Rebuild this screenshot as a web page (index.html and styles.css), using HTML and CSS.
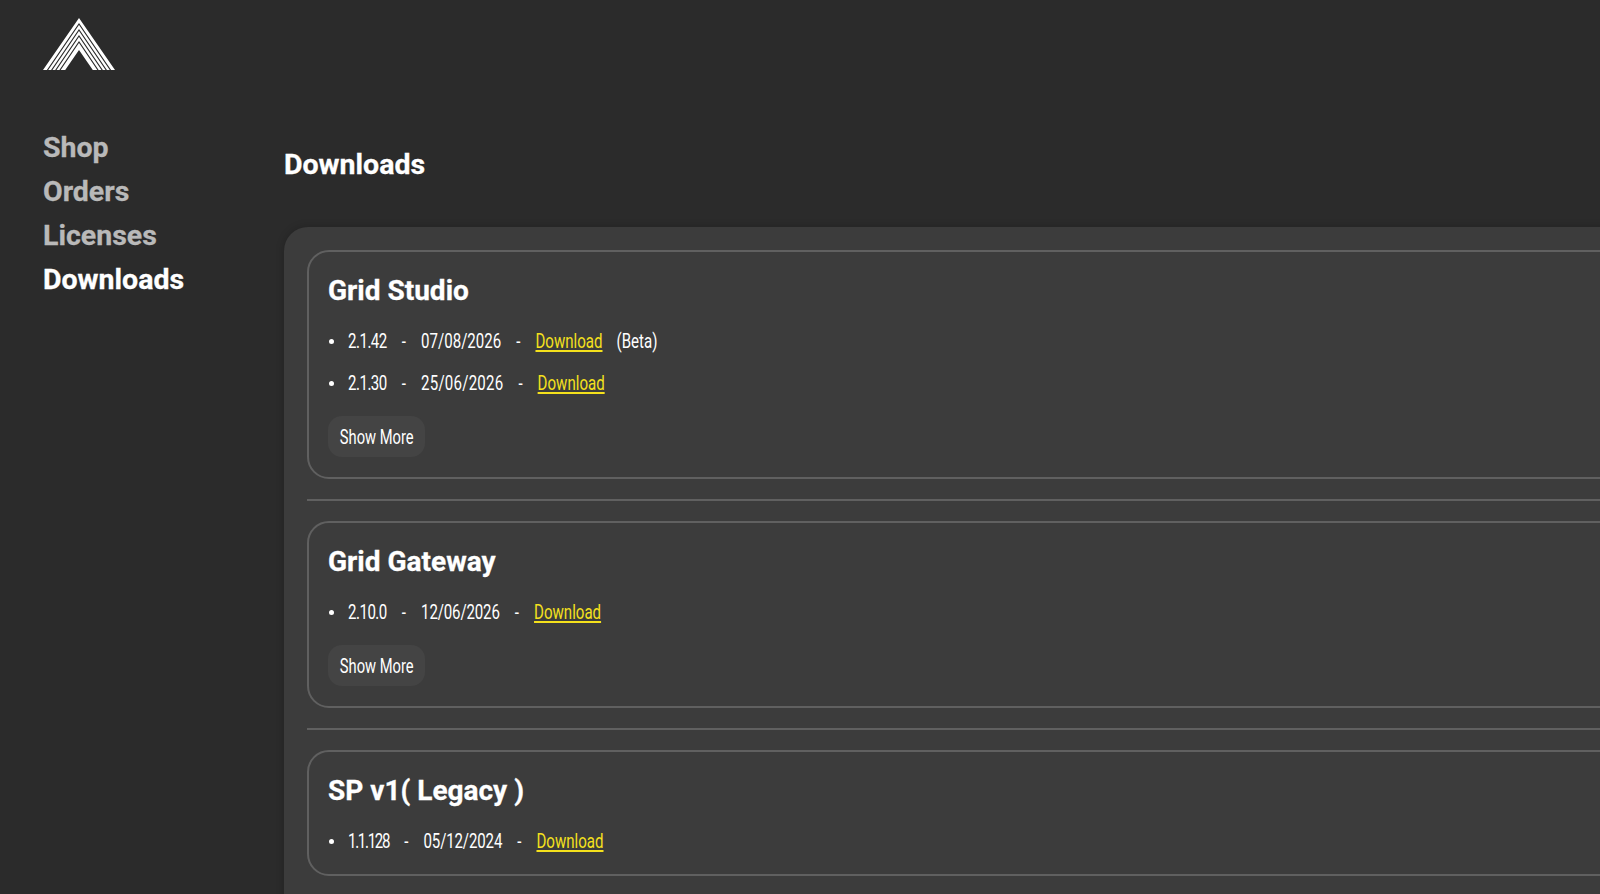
FILE: index.html
```html
<!DOCTYPE html>
<html lang="en">
    <head>
        <meta charset="UTF-8">
        <meta name="viewport" content="width=device-width, initial-scale=1.0">
        <title>Downloads</title>
        <link rel="stylesheet" href="styles.css">
    </head>
    <body>
        <div class="layout">
            <aside class="sidebar">
                <a class="logo" href="#">
                    <svg width="72" height="52" viewBox="0 0 72 52">
                        <polygon points="36,0 72,52 49.800,52 36,32 22.200,52 0,52" fill="#fff"/>
                        <g fill="none" stroke="#2b2b2b" stroke-width="1.1">
                            <polyline points="4.200,52.500 36,6 67.800,52.500"/>
                            <polyline points="8.400,52.500 36,12 63.600,52.500"/>
                            <polyline points="12.500,52.500 36,18 59.500,52.500"/>
                            <polyline points="16.700,52.500 36,24 55.300,52.500"/>
                        </g>
                    </svg>
                </a>
                <nav class="nav">
                    <a href="#">Shop</a>
                    <a href="#">Orders</a>
                    <a href="#">Licenses</a>
                    <a href="#" class="active">Downloads</a>
                </nav>
            </aside>

            <main class="main">
                <h1>Downloads</h1>
                <div class="panel">
                    <section class="product">
                        <h2>Grid Studio</h2>
                        <ul>
                            <li><div class="row"><span class="ver">2.1.42</span><span>-</span><span>07/08/2026</span><span>-</span><a href="#">Download</a><span>(Beta)</span></div></li>
                            <li><div class="row"><span class="ver">2.1.30</span><span>-</span><span class="date-wide">25/06/2026</span><span>-</span><a href="#">Download</a></div></li>
                        </ul>
                        <button class="more-btn"><span>Show More</span></button>
                    </section>
                    <hr>
                    <section class="product">
                        <h2>Grid Gateway</h2>
                        <ul>
                            <li><div class="row"><span class="ver">2.10.0</span><span>-</span><span class="date-ones">12/06/2026</span><span>-</span><a href="#">Download</a></div></li>
                        </ul>
                        <button class="more-btn"><span>Show More</span></button>
                    </section>
                    <hr>
                    <section class="product">
                        <h2>SP v1( Legacy )</h2>
                        <ul>
                            <li><div class="row"><span class="ver-ones">1.1.128</span><span>-</span><span class="date-ones">05/12/2024</span><span>-</span><a href="#">Download</a></div></li>
                        </ul>
                    </section>
                </div>
            </main>
        </div>
    </body>
</html>
```

FILE: styles.css
```css
html, body {
    height: 100%;
    margin: 0;
    overflow: hidden;
}

body {
    font-family: Roboto, "Liberation Sans", sans-serif;
    background-color: #2b2b2b;
    color: #fff;
}

a {
    text-decoration: none;
}

.layout {
    display: flex;
    width: 1800px;
}

.sidebar {
    width: 284px;
    flex-shrink: 0;
    padding: 18px 0 0 43px;
    box-sizing: border-box;
}

.logo {
    display: block;
    height: 54px;
}

.nav {
    display: flex;
    flex-direction: column;
    margin-top: 54px;
    font-size: 28.500px;
    font-weight: 700;
    line-height: 44px;
    -webkit-text-stroke: 0.3px;
}

.nav a {
    color: #b9b9b9;
}

.nav a.active {
    color: #fff;
}

.main {
    flex: 1;
    padding-top: 146px;
}

h1 {
    margin: 0 0 44px;
    font-size: 28.500px;
    font-weight: 700;
    line-height: 37px;
    -webkit-text-stroke: 0.3px;
}

.panel {
    height: 700px;
    padding: 23px;
    background-color: #3c3c3c;
    border-radius: 24px 0 0 0;
    box-shadow: 0 0 8px rgba(0, 0, 0, 0.2);
}

.product {
    padding: 0 19px 11px;
    border: 2px solid #606060;
    border-radius: 22px;
}

.product:last-child {
    padding-bottom: 12px;
}

.product h2 {
    margin: 20px 0 0;
    font-size: 28px;
    font-weight: 700;
    line-height: 38px;
    -webkit-text-stroke: 0.3px;
}

.product ul {
    margin: 10px 0 0;
    padding: 0;
    list-style: none;
}

.product li {
    display: flex;
    align-items: center;
    height: 42px;
}

.product li::before {
    content: "";
    flex-shrink: 0;
    width: 5px;
    height: 5px;
    margin: 0 14px 0 1px;
    border-radius: 50%;
    background-color: #fff;
}

/* no condensed family is installed, so the row text is squeezed */
.row {
    font-size: 21px;
    white-space: nowrap;
    transform: scaleX(0.717);
    transform-origin: left center;
}

.row span {
    margin-right: 21px;
}

.row a {
    margin-right: 19.500px;
    color: #f5e11c;
    text-decoration: underline;
    text-decoration-thickness: 2px;
    text-underline-offset: 2px;
}

/* the 1 is much narrower in the original face */
.ver {
    letter-spacing: -0.7px;
}

.ver-ones {
    letter-spacing: -1.8px;
}

.date-ones {
    letter-spacing: -0.2px;
}

.date-wide {
    letter-spacing: 0.3px;
}

.more-btn {
    display: flex;
    justify-content: center;
    align-items: center;
    width: 97px;
    height: 41px;
    margin: 12px 0 9px;
    padding: 0;
    border: none;
    border-radius: 14px;
    background-color: #444;
    color: #fff;
    font-family: inherit;
    font-size: 21px;
}

.more-btn span {
    flex-shrink: 0;
    transform: scaleX(0.7);
}

hr {
    height: 2px;
    margin: 20px 0;
    border: none;
    background-color: #606060;
}
```
